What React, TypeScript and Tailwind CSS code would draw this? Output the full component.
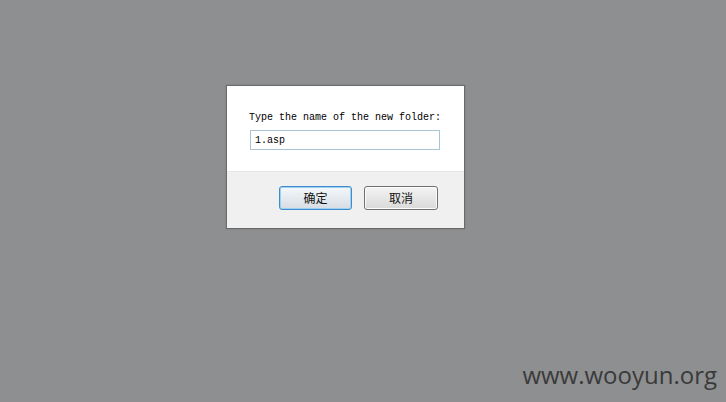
import React from "react";

export default function App() {
  return (
    <div className="relative w-[726px] h-[402px] overflow-hidden bg-[#8e8f90]">
      <div className="pt-[85px] pl-[226px]">
        <div className="w-[239px] h-[144px] border border-[#6a6a6a] bg-white flex flex-col shadow-[0_0_2px_rgba(0,0,0,0.15)]">
          <div className="h-[86px] flex flex-col pl-[22px] pt-[26px] border-b border-[#e6e6e6]">
            <div
              className="text-[10px] leading-[12px] text-[#000] whitespace-nowrap"
              style={{ fontFamily: '"Liberation Mono", "DejaVu Sans Mono", monospace' }}
            >
              Type the name of the new folder:
            </div>
            <div className="mt-[6px] ml-[1px] w-[190px] h-[20px] border border-[#a9c4d6] bg-white flex items-center pl-[4px]">
              <span
                className="text-[10px] text-[#000]"
                style={{ fontFamily: '"Liberation Mono", "DejaVu Sans Mono", monospace' }}
              >
                1.asp
              </span>
            </div>
          </div>
          <div className="flex-1 bg-[#f0f0f0] flex items-start pl-[52px] pt-[14px] gap-[12px]">
            <button
              className="w-[73px] h-[24px] rounded-[3px] border border-[#3c8ccf] bg-gradient-to-b from-[#f4f8fb] to-[#d6dde3] shadow-[inset_0_0_0_1px_#9ed0ef] text-[12px] text-[#111] flex items-center justify-center"
              style={{ fontFamily: '"Noto Sans CJK SC", sans-serif' }}
            >
              确定
            </button>
            <button
              className="w-[74px] h-[24px] rounded-[3px] border border-[#707070] bg-gradient-to-b from-[#f4f4f4] to-[#d9d9d9] shadow-[inset_0_0_0_1px_#fbfbfb] text-[12px] text-[#111] flex items-center justify-center"
              style={{ fontFamily: '"Noto Sans CJK SC", sans-serif' }}
            >
              取消
            </button>
          </div>
        </div>
      </div>
      <div
        className="absolute right-[9px] bottom-[15px] text-[24px] leading-none text-[#3a3a3a]"
        style={{ fontFamily: '"Open Sans", "DejaVu Sans", sans-serif' }}
      >
        www.wooyun.org
      </div>
    </div>
  );
}
